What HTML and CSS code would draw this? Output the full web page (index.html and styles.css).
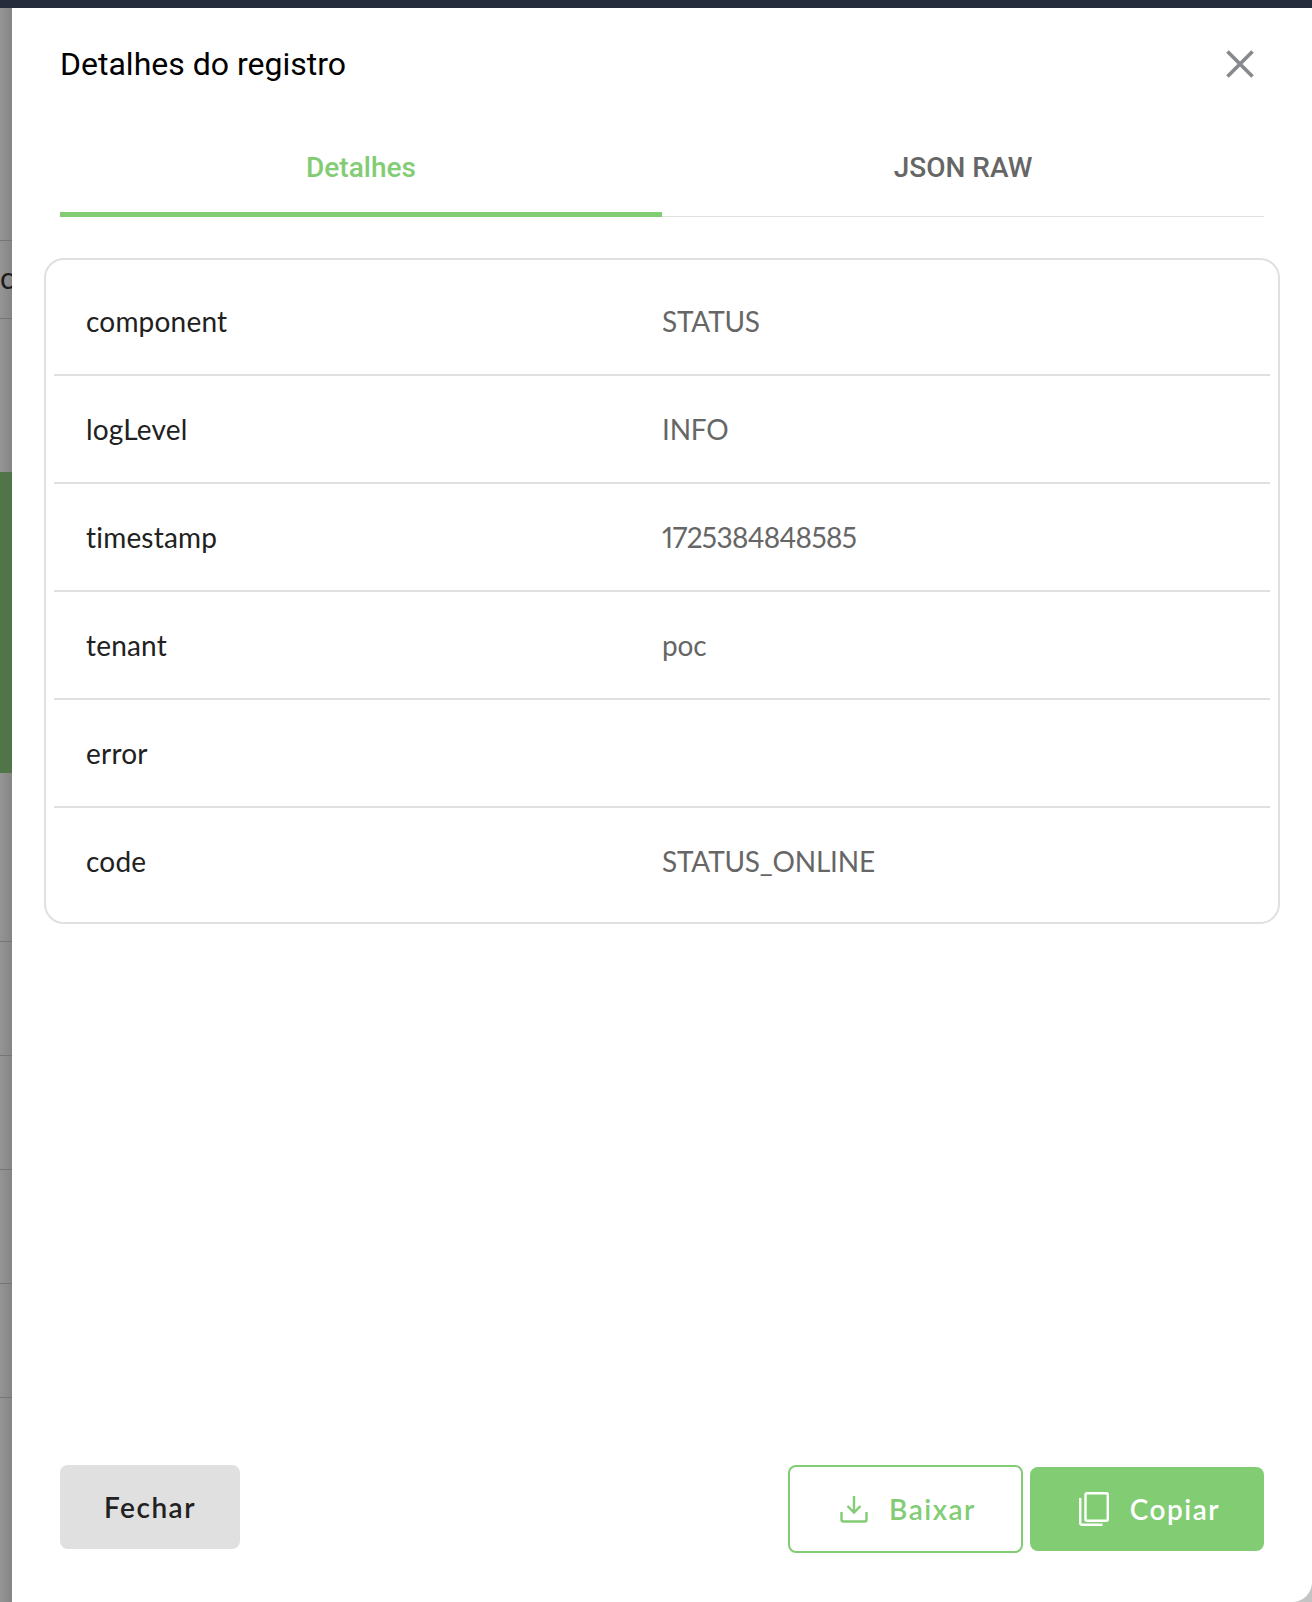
FILE: index.html
```html
<!DOCTYPE html>
<html lang="pt-BR">
<head>
    <meta charset="UTF-8">
    <title>Detalhes do registro</title>
    <link rel="stylesheet" href="styles.css">
</head>
<body>
    <div class="topbar"></div>
    <div class="page">
        <div class="backdrop">
            <div class="back-row back-first"><span class="back-text">c</span></div>
            <div class="back-green"></div>
            <div class="back-row back-a"></div>
            <div class="back-row back-b"></div>
            <div class="back-row back-b"></div>
            <div class="back-row back-b"></div>
            <div class="back-row back-b"></div>
        </div>
        <div class="drawer">
            <div class="drawer-header">
                <h2 class="drawer-title">Detalhes do registro</h2>
                <svg class="close-icon" viewBox="0 0 28 28" fill="none" stroke="#85888c" stroke-width="3.6">
                    <path d="M1.5 1.5L26.5 26.5M26.5 1.5L1.5 26.5"/>
                </svg>
            </div>
            <div class="tabs">
                <div class="tab tab-active">Detalhes</div>
                <div class="tab">JSON RAW</div>
            </div>
            <div class="card">
                <div class="row"><span class="row-key">component</span><span class="row-value">STATUS</span></div>
                <div class="row"><span class="row-key">logLevel</span><span class="row-value">INFO</span></div>
                <div class="row"><span class="row-key">timestamp</span><span class="row-value row-number">1725384848585</span></div>
                <div class="row"><span class="row-key">tenant</span><span class="row-value">poc</span></div>
                <div class="row"><span class="row-key">error</span><span class="row-value"></span></div>
                <div class="row"><span class="row-key">code</span><span class="row-value">STATUS_ONLINE</span></div>
            </div>
            <div class="footer">
                <button class="btn btn-close">Fechar</button>
                <div class="footer-right">
                    <button class="btn btn-outline">
                        <svg class="btn-icon" viewBox="0 0 28 28" fill="none" stroke="#82cc74" stroke-width="2.4">
                            <path d="M14 1V17M7.5 11L14 17.5L20.5 11M1.5 17V24.5Q1.5 26.5 3.5 26.5H24.5Q26.5 26.5 26.5 24.5V17"/>
                        </svg>
                        Baixar
                    </button>
                    <button class="btn btn-solid">
                        <svg class="btn-icon btn-icon-copy" viewBox="0 0 30 34" fill="none" stroke="#fff" stroke-width="2.4">
                            <rect x="6.5" y="1.2" width="22.3" height="27.5" rx="1.5"/>
                            <path d="M1.2 6V31Q1.2 32.8 3 32.8H23.5"/>
                        </svg>
                        Copiar
                    </button>
                </div>
            </div>
        </div>
    </div>
</body>
</html>
```

FILE: styles.css
```css
* {
    box-sizing: border-box;
}

body {
    margin: 0;
    height: 1602px;
    display: flex;
    flex-direction: column;
    overflow: hidden;
    background-color: #c4c4c4;
    font-family: Lato, "Noto Sans", sans-serif;
}

.topbar {
    height: 8px;
    background-color: #252d3d;
}

.page {
    flex: 1;
    display: flex;
}

/* what is left of the page behind the drawer */
.backdrop {
    width: 12px;
    padding-top: 232px;
    background: linear-gradient(to right, #959595, #858585);
    overflow: hidden;
}

.back-row {
    border-bottom: 1px solid #757575;
}

.back-first {
    height: 79px;
    border-top: 1px solid #757575;
    line-height: 72px;
}

.back-text {
    font-size: 30px;
    color: #1c1c1c;
}

.back-green {
    height: 301px;
    margin-top: 153px;
    background-color: #4f7549;
}

.back-a {
    height: 169px;
}

.back-b {
    height: 114px;
}

.drawer {
    flex: 1;
    display: flex;
    flex-direction: column;
    background-color: #fff;
    border-bottom-right-radius: 20px;
    padding: 0 32px;
}

.drawer-header {
    display: flex;
    justify-content: space-between;
    align-items: center;
    padding: 37px 16px 0 16px;
}

.drawer-title {
    margin: 0;
    font-family: Roboto, sans-serif;
    font-weight: 400;
    font-size: 32px;
    line-height: 38px;
    color: #000;
}

.close-icon {
    width: 28px;
    height: 28px;
    margin-right: 10px;
}

.tabs {
    display: flex;
    margin: 47px 16px 0 16px;
    border-bottom: 1px solid #e0e0e0;
}

.tab {
    flex: 1;
    height: 87px;
    padding-top: 21px;
    margin-bottom: -1px;
    text-align: center;
    font-family: Roboto, sans-serif;
    font-weight: 500;
    font-size: 28px;
    line-height: 34px;
    color: #666;
}

.tab-active {
    color: #82cc74;
    border-bottom: 5px solid #82cc74;
}

.card {
    margin-top: 41px;
    padding: 8px;
    border: 2px solid #e0e0e0;
    border-radius: 20px;
}

.row {
    display: flex;
    align-items: center;
    height: 108px;
    padding-left: 32px;
    border-bottom: 2px solid #e0e0e0;
    font-size: 28px;
}

.row:last-child {
    height: 106px;
    border-bottom: none;
}

.row-key {
    width: 576px;
    color: #212121;
    letter-spacing: 0.2px;
}

.row-value {
    color: #666;
    letter-spacing: -0.2px;
    font-variant-numeric: proportional-nums;
}

.row-number {
    letter-spacing: -0.65px;
}

.footer {
    margin-top: auto;
    padding: 0 16px 49px 16px;
    display: flex;
    justify-content: space-between;
    align-items: flex-start;
}

.footer-right {
    display: flex;
    align-items: center;
    gap: 7px;
}

.btn {
    display: flex;
    align-items: center;
    justify-content: center;
    gap: 21px;
    font-family: Lato, "Noto Sans", sans-serif;
    font-weight: 600;
    font-size: 28px;
    letter-spacing: 1.5px;
    border-radius: 8px;
    border: none;
}

.btn-close {
    width: 180px;
    height: 84px;
    background-color: #e0e0e0;
    color: #212121;
}

.btn-outline {
    width: 235px;
    height: 88px;
    padding-left: 11px;
    background-color: #fff;
    border: 2px solid #82cc74;
    color: #82cc74;
}

.btn-solid {
    width: 234px;
    height: 84px;
    padding-left: 11px;
    background-color: #82cc74;
    color: #fff;
}

.btn-icon {
    width: 28px;
    height: 28px;
}

.btn-icon-copy {
    width: 30px;
    height: 34px;
}
```
